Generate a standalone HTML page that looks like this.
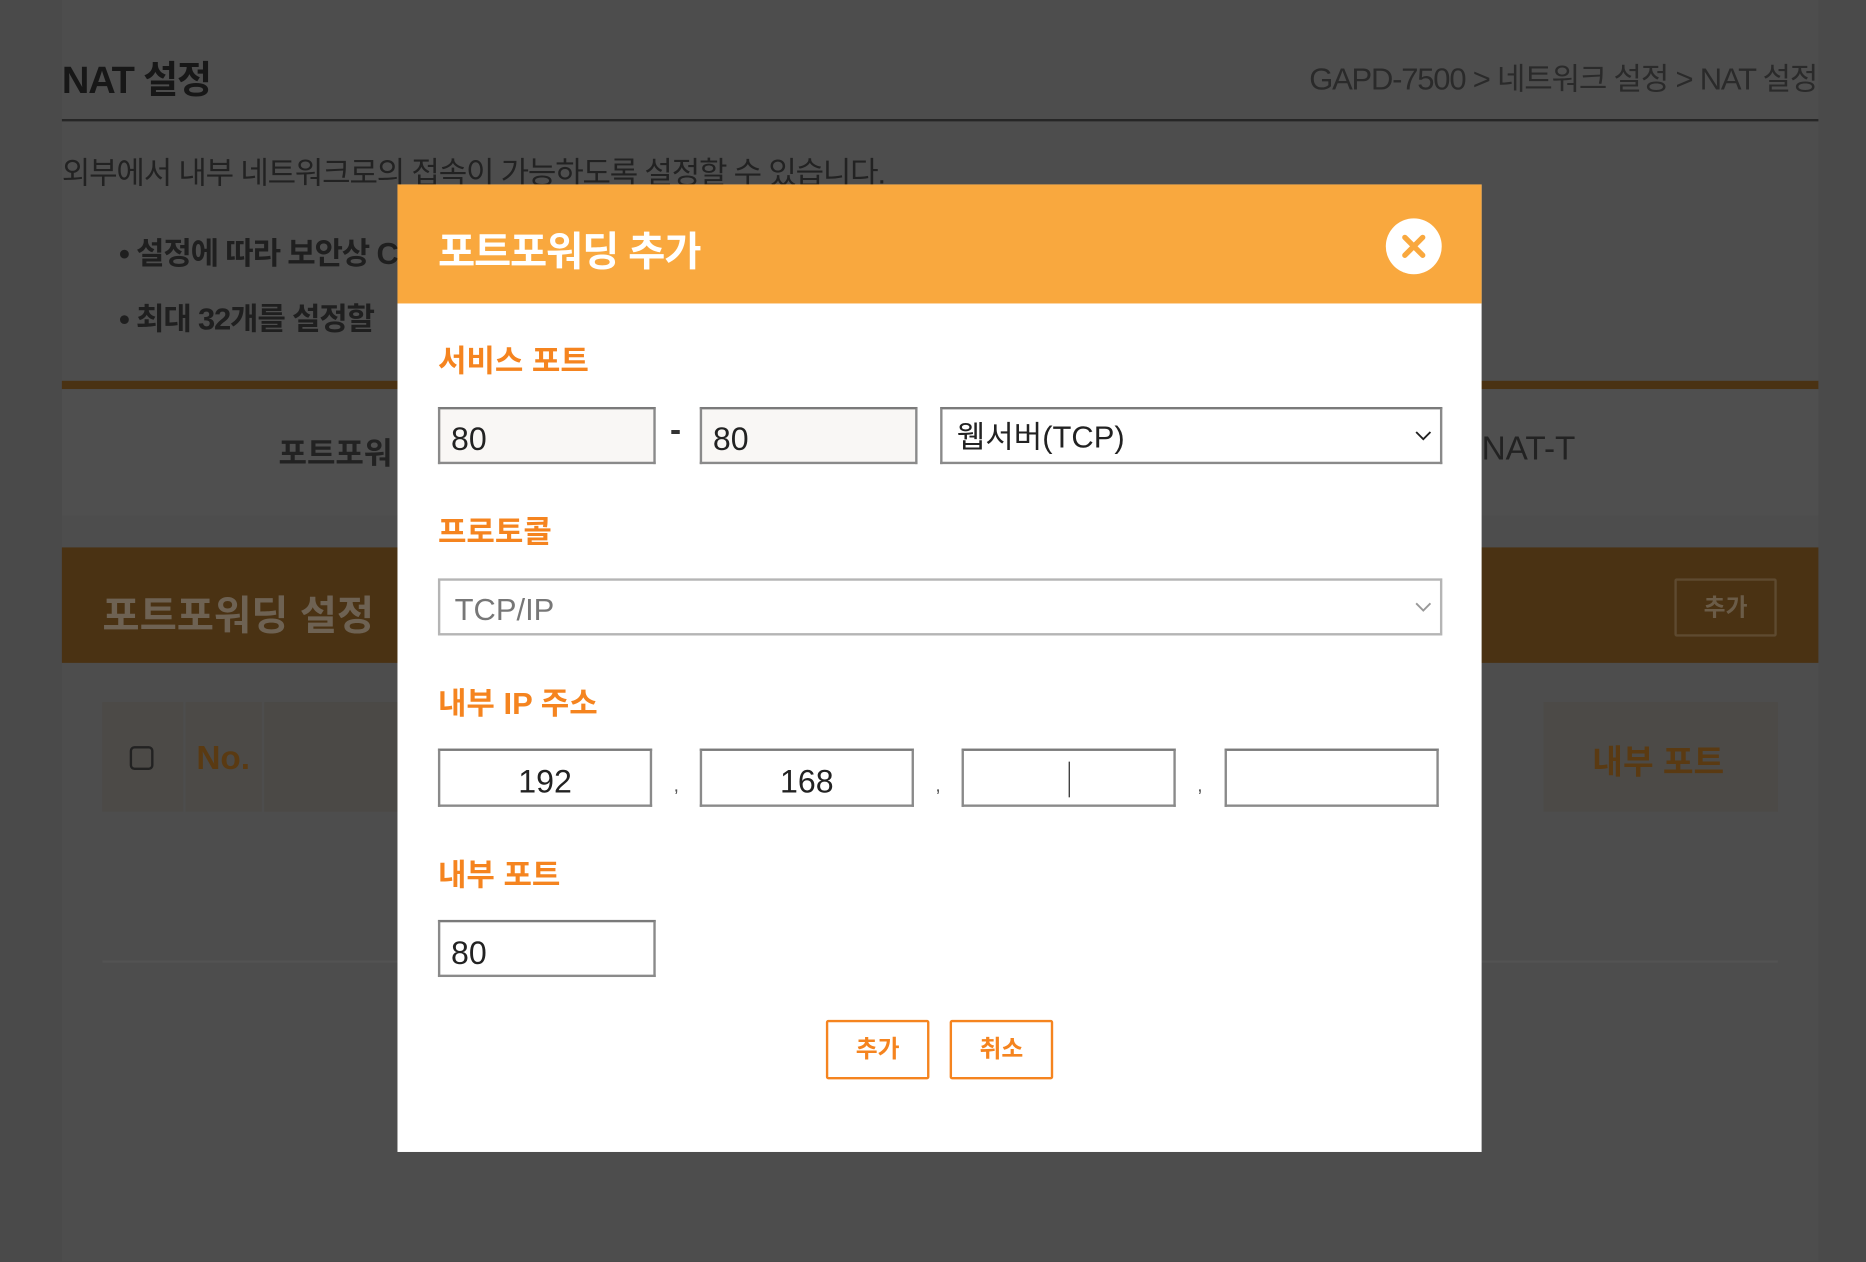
<!DOCTYPE html>
<html><head><meta charset="utf-8"><style>
html,body{margin:0;padding:0;width:1866px;height:1262px;overflow:hidden;background:#4a4a4a}
#s{position:absolute;left:0;top:0;width:1568px;height:1060px;transform:scale(1.19005);transform-origin:0 0;font-family:"Liberation Sans","Noto Sans CJK KR",sans-serif}
.a{position:absolute;white-space:nowrap}
.inp{position:absolute;box-sizing:border-box;border:2px solid #8a8a8a;border-top-color:#7a7a7a;background:#fff;font-size:27px;color:#222;line-height:50px;padding-left:9px}
.lbl{position:absolute;left:368px;color:#f5841f;font-weight:bold;font-size:26px;line-height:30px}
.dot{position:absolute;font-size:16px;color:#555}
.btn{position:absolute;top:857px;width:87px;height:50px;box-sizing:border-box;border:2px solid #f5841f;border-radius:2px;color:#f5841f;font-weight:bold;font-size:20px;text-align:center;line-height:46px;background:#fff}
</style></head><body><div id="s">
<div class="a" style="left:52px;top:0;width:1476px;height:1060px;background:#4d4d4d"></div>
<div class="a" style="left:52px;top:42px;font-size:32px;font-weight:bold;color:#171717;letter-spacing:-1px">NAT 설정</div>
<div class="a" style="right:41px;top:46px;font-size:26px;color:#2a2a2a;letter-spacing:-1px">GAPD-7500 &gt; 네트워크 설정 &gt; NAT 설정</div>
<div class="a" style="left:52px;top:100px;width:1476px;height:2px;background:#262626"></div>
<div class="a" style="left:52px;top:125px;font-size:26px;color:#222;letter-spacing:-1px">외부에서 내부 네트워크로의 접속이 가능하도록 설정할 수 있습니다.</div>
<div class="a" style="left:100px;top:193px;font-size:26px;font-weight:bold;color:#1f1f1f;letter-spacing:-1px">• 설정에 따라 보안상 C</div>
<div class="a" style="left:100px;top:248px;font-size:26px;font-weight:bold;color:#1f1f1f;letter-spacing:-1px">• 최대 32개를 설정할 </div>
<div class="a" style="left:52px;top:320px;width:1476px;height:7px;background:#4a3213"></div>
<div class="a" style="left:52px;top:327px;width:1476px;height:106px;background:#4f4f4f"></div>
<div class="a" style="left:234px;top:361px;font-size:26px;font-weight:bold;color:#222">포트포워</div>
<div class="a" style="left:1245px;top:361px;font-size:28px;color:#222">NAT-T</div>
<div class="a" style="left:52px;top:460px;width:1476px;height:97px;background:#4a3213"></div>
<div class="a" style="left:86px;top:490px;font-size:34px;font-weight:bold;color:#6e6253">포트포워딩 설정</div>
<div class="a" style="left:1407px;top:486px;width:86px;height:49px;box-sizing:border-box;border:2px solid #5e4a30;border-radius:2px;color:#6b5c48;font-size:20px;font-weight:bold;text-align:center;line-height:47px">추가</div>
<div class="a" style="left:86px;top:590px;width:68px;height:92px;background:#4c4a47"></div>
<div class="a" style="left:156px;top:590px;width:64px;height:92px;background:#4c4a47"></div>
<div class="a" style="left:222px;top:590px;width:1000px;height:92px;background:#4b4946"></div>
<div class="a" style="left:1297px;top:590px;width:197px;height:92px;background:#4c4a47"></div>
<div class="a" style="left:109px;top:627px;width:20px;height:20px;border:2px solid #222;border-radius:4px;box-sizing:border-box"></div>
<div class="a" style="left:165px;top:621px;font-size:28px;font-weight:bold;color:#5a3a12">No.</div>
<div class="a" style="left:1338px;top:619px;font-size:28px;font-weight:bold;color:#5a3a12">내부 포트</div>
<div class="a" style="left:86px;top:807px;width:1408px;height:2px;background:#535353"></div>

<div class="a" style="left:334px;top:155px;width:911px;height:813px;background:#fff"></div>
<div class="a" style="left:334px;top:155px;width:911px;height:100px;background:#f9a83e"></div>
<div class="a" style="left:368px;top:184px;font-size:34px;font-weight:bold;color:#fff;letter-spacing:-1px">포트포워딩 추가</div>
<svg class="a" style="left:1164px;top:183px" width="48" height="48" viewBox="0 0 48 48"><circle cx="24" cy="24" r="23.5" fill="#fff"/><path d="M16.5 16.5L31.5 31.5M31.5 16.5L16.5 31.5" stroke="#f9a83e" stroke-width="4.5" stroke-linecap="round"/></svg>

<div class="lbl" style="top:288px">서비스 포트</div>
<div class="inp" style="left:368px;top:342px;width:183px;height:48px;background:#f9f7f5">80</div>
<div class="a" style="left:563px;top:345px;font-size:28px;font-weight:bold;color:#333">-</div>
<div class="inp" style="left:588px;top:342px;width:183px;height:48px;background:#f9f7f5">80</div>
<div class="inp" style="left:790px;top:342px;width:422px;height:48px;padding-left:12px;line-height:46px;font-size:26px">웹서버(TCP)</div>
<svg class="a" style="left:1189px;top:361px" width="14" height="10"><path d="M1 2L7 8L13 2" stroke="#222" stroke-width="1.6" fill="none"/></svg>

<div class="lbl" style="top:432px">프로토콜</div>
<div class="inp" style="left:368px;top:486px;width:844px;height:48px;border-color:#b5b5b5;color:#777;padding-left:12px;line-height:48px;font-size:26px">TCP/IP</div>
<svg class="a" style="left:1189px;top:505px" width="14" height="10"><path d="M1 2L7 8L13 2" stroke="#999" stroke-width="1.6" fill="none"/></svg>

<div class="lbl" style="top:576px">내부 IP 주소</div>
<div class="inp" style="left:368px;top:629px;width:180px;height:49px;text-align:center;padding:0;line-height:52px">192</div>
<div class="dot" style="left:566px;top:652px">,</div>
<div class="inp" style="left:588px;top:629px;width:180px;height:49px;text-align:center;padding:0;line-height:52px">168</div>
<div class="dot" style="left:786px;top:652px">,</div>
<div class="inp" style="left:808px;top:629px;width:180px;height:49px"></div>
<div class="a" style="left:898px;top:640px;width:1px;height:30px;background:#222"></div>
<div class="dot" style="left:1006px;top:652px">,</div>
<div class="inp" style="left:1029px;top:629px;width:180px;height:49px"></div>

<div class="lbl" style="top:720px">내부 포트</div>
<div class="inp" style="left:368px;top:773px;width:183px;height:48px;line-height:52px">80</div>

<div class="btn" style="left:694px">추가</div>
<div class="btn" style="left:798px">취소</div>
</div></body></html>
